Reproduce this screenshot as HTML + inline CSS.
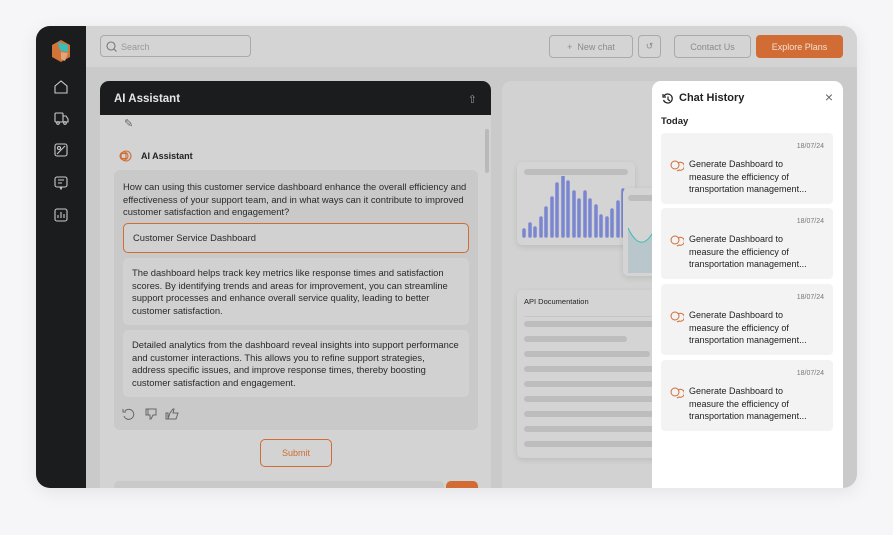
<!DOCTYPE html>
<html><head><style>
*{box-sizing:border-box;margin:0;padding:0}
body{width:893px;height:535px;background:#f6f6f9;font-family:"Liberation Sans",sans-serif;position:relative;overflow:hidden;color:#222}
.frame{position:absolute;left:36px;top:26px;width:821px;height:462px;border-radius:14px;overflow:hidden;background:#c9cac9;box-shadow:0 4px 18px rgba(0,0,0,.08)}
.side{position:absolute;left:0;top:0;width:50px;height:462px;background:#1b1c1e}
.top{position:absolute;left:50px;top:0;right:0;height:41px;background:#d3d4d3}
.btn{position:absolute;top:9px;height:23px;border:1px solid #a9aaa9;border-radius:4px;font-size:9px;color:#8a8b8a;display:flex;align-items:center;justify-content:center}
.panel{position:absolute;left:64px;top:55px;width:391px;height:420px;background:#d2d3d2;border-radius:9px 9px 0 0;overflow:hidden}
.ph{height:34px;background:#1b1c1e;color:#e6e6e6;font-weight:bold;font-size:11.5px;padding:12px 14px}
.box{position:absolute;background:#d0d1d0;border-radius:5px;font-size:9.4px;line-height:12.6px;color:#2a2a2a;padding:0 9px}
.hist{position:absolute;left:616px;top:55px;width:191px;height:420px;background:#fff;border-radius:9px 9px 0 0}
.card{position:absolute;left:9px;width:172px;height:71px;background:#f3f3f3;border-radius:4px}
.card .d{position:absolute;right:9px;top:10px;font-size:7px;color:#777}
.card .t{position:absolute;left:28px;top:25px;font-size:9px;line-height:12.5px;color:#222}
.bar{position:absolute;height:6px;background:#bcbdbc;border-radius:3px;left:22px}
</style></head><body>
<div class="frame">
 <div class="side">
  <svg style="position:absolute;left:15px;top:13px" width="20" height="24" viewBox="0 0 20 24"><path d="M10 1 L19 6 L19 18 L10 23 L1 18 L1 6Z" fill="#d2733a"/><path d="M7 3 L17 6 L17 13 L10 12 L8 9Z" fill="#3bbcb4"/><path d="M10 13 L17 14 L14 22 L10 20Z" fill="#e0a57a"/></svg>
  <svg style="position:absolute;left:17px;top:54px" width="16" height="170" fill="none" stroke="#ccc" stroke-width="1.1">
   <path d="M2 6 L8 1 L14 6 L14 13 L2 13Z"/>
   <rect x="2" y="33" width="8" height="9" rx="1"/><path d="M10 36 h3 l2 3 v3 h-5"/><circle cx="5" cy="43" r="1.3"/><circle cx="12" cy="43" r="1.3"/>
   <rect x="2" y="64" width="12" height="12" rx="2"/><path d="M4 74 L12 66"/><circle cx="6" cy="68" r="1.5"/>
   <rect x="2" y="97" width="12" height="10" rx="2"/><path d="M5 100h6M5 103h4M7 107 l1 2 1-2"/>
   <rect x="2" y="129" width="12" height="12" rx="2"/><path d="M5 138v-3M8 138v-6M11 138v-4"/>
  </svg>
 </div>
 <div class="top">
  <div style="position:absolute;left:14px;top:9px;width:151px;height:22px;border:1px solid #a9aaa9;border-radius:4px;font-size:9px;color:#999;padding:6px 0 0 20px">Search
   <svg style="position:absolute;left:5px;top:5px" width="11" height="11" fill="none" stroke="#777" stroke-width="1.1"><circle cx="5" cy="5" r="4"/><path d="M8 8l2.5 2.5"/></svg></div>
  <div class="btn" style="left:463px;width:84px">+&nbsp; New chat</div>
  <div class="btn" style="left:552px;width:23px">↺</div>
  <div class="btn" style="left:588px;width:77px">Contact Us</div>
  <div class="btn" style="left:670px;width:87px;background:#d06c34;border-color:#d06c34;color:#f3e0d3">Explore Plans</div>
 </div>
 <div class="panel">
  <div class="ph">AI Assistant<span style="float:right;font-weight:normal;color:#999;font-size:11px">⇧</span></div>
  <div style="position:absolute;left:24px;top:36px;font-size:11px;color:#666">✎</div>
  <div style="position:absolute;left:385px;top:48px;width:4px;height:44px;background:#b8b9b8;border-radius:2px"></div>
  <svg style="position:absolute;left:18px;top:69px" width="14" height="12" fill="none" stroke="#d06c34" stroke-width="1.1"><circle cx="8" cy="6" r="5"/><circle cx="6" cy="6" r="4"/><rect x="3" y="3.5" width="5" height="5"/></svg>
  <div style="position:absolute;left:41px;top:70px;font-size:9px;font-weight:bold;color:#222">AI Assistant</div>
  <div style="position:absolute;left:14px;top:89px;width:364px;height:260px;background:#c8c9c8;border-radius:6px"></div>
  <div class="box" style="left:14px;top:97px;width:364px;background:none;padding-top:3px">How can using this customer service dashboard enhance the overall efficiency and effectiveness of your support team, and in what ways can it contribute to improved customer satisfaction and engagement?</div>
  <div class="box" style="left:23px;top:142px;width:346px;height:30px;border:1px solid #d06c34;padding-top:8px">Customer Service Dashboard</div>
  <div class="box" style="left:23px;top:177px;width:346px;height:67px;padding-top:9px">The dashboard helps track key metrics like response times and satisfaction scores. By identifying trends and areas for improvement, you can streamline support processes and enhance overall service quality, leading to better customer satisfaction.</div>
  <div class="box" style="left:23px;top:249px;width:346px;height:67px;padding-top:9px">Detailed analytics from the dashboard reveal insights into support performance and customer interactions. This allows you to refine support strategies, address specific issues, and improve response times, thereby boosting customer satisfaction and engagement.</div>
  <svg style="position:absolute;left:22px;top:326px" width="62" height="14" fill="none" stroke="#666" stroke-width="1"><path d="M3 4 A5 5 0 1 1 2 9M1 2v3h3"/><path d="M26 2h8v6h-3l-2 4h-1v-4h-2zM24 2h2v6h-2z"/><path d="M46 12h8l2-6h-5l1-4h-1l-3 4zM44 6h2v6h-2z"/></svg>
  <div style="position:absolute;left:160px;top:358px;width:72px;height:28px;border:1px solid #d06c34;border-radius:5px;font-size:9px;color:#d06c34;text-align:center;line-height:26px">Submit</div>
  <div style="position:absolute;left:14px;top:400px;width:330px;height:30px;background:#c8c9c8;border-radius:5px"></div>
  <div style="position:absolute;left:346px;top:400px;width:32px;height:20px;background:#d06c34;border-radius:5px"></div>
 </div>
 <div style="position:absolute;left:466px;top:55px;width:160px;height:420px;background:#d1d2d1;border-radius:9px 0 0 0"></div>
 <div style="position:absolute;left:481px;top:136px;width:118px;height:83px;background:#d3d4d3;border-radius:5px;box-shadow:0 2px 6px rgba(0,0,0,.1)">
  <div style="position:absolute;left:7px;top:7px;width:104px;height:6px;background:#bcbdbc;border-radius:3px"></div>
  <svg style="position:absolute;left:5px;top:14px" width="110" height="64"><g stroke-width="3.5" stroke-linecap="round">
  <path d="M2 60v-6M8 60v-12M13 60v-8M19 60v-18M24 60v-28M30 60v-38M35 60v-52M41 60v-62M46 60v-54M52 60v-44M57 60v-36M63 60v-44M68 60v-36M74 60v-30M79 60v-20M85 60v-18M90 60v-26M96 60v-34M101 60v-46" stroke="#7b86d0"/></g></svg>
 </div>
 <div style="position:absolute;left:587px;top:162px;width:40px;height:88px;background:#d3d4d3;border-radius:5px;box-shadow:0 2px 6px rgba(0,0,0,.1)">
  <div style="position:absolute;left:5px;top:7px;width:35px;height:6px;background:#bcbdbc;border-radius:3px"></div>
  <svg style="position:absolute;left:5px;top:30px" width="35" height="55"><path d="M0 10 Q12 35 24 16 L35 0 V55 H0Z" fill="#b9c7cc"/><path d="M0 10 Q12 35 24 16 L35 0" stroke="#3bbcb4" fill="none"/></svg>
 </div>
 <div style="position:absolute;left:481px;top:264px;width:150px;height:168px;background:#d3d4d3;border-radius:5px;box-shadow:0 2px 6px rgba(0,0,0,.1)">
  <div style="position:absolute;left:7px;top:7px;font-size:7.5px;color:#222">API Documentation</div>
  <div style="position:absolute;left:7px;top:26px;width:140px;height:1px;background:#c4c5c4"></div>
  <div class="bar" style="left:7px;top:31px;width:140px"></div>
  <div class="bar" style="left:7px;top:46px;width:103px"></div>
  <div class="bar" style="left:7px;top:61px;width:126px"></div>
  <div class="bar" style="left:7px;top:76px;width:140px"></div>
  <div class="bar" style="left:7px;top:91px;width:140px"></div>
  <div class="bar" style="left:7px;top:106px;width:140px"></div>
  <div class="bar" style="left:7px;top:121px;width:140px"></div>
  <div class="bar" style="left:7px;top:136px;width:140px"></div>
  <div class="bar" style="left:7px;top:151px;width:140px"></div>
 </div>
 <div class="hist">
  <svg style="position:absolute;left:10px;top:12px" width="12" height="12" fill="none" stroke="#222" stroke-width="1.2"><path d="M2 3 A4.5 4.5 0 1 1 1.5 7"/><path d="M1 1v3h3M6 3.5v3l2 1.5"/></svg>
  <div style="position:absolute;left:27px;top:11px;font-size:11px;font-weight:bold;color:#222">Chat History</div>
  <div style="position:absolute;right:10px;top:8px;font-size:14px;color:#666">×</div>
  <div style="position:absolute;left:9px;top:35px;font-size:9.5px;font-weight:bold;color:#222">Today</div>
  <div class="card" style="top:52px"><div class="d">18/07/24</div><div class="t">Generate Dashboard to<br>measure the efficiency of<br>transportation management...</div><svg style="position:absolute;left:9px;top:27px" width="14" height="12" fill="none" stroke="#d06c34"><circle cx="5" cy="5" r="4"/><path d="M8 3a4 4 0 1 1 1 7l-2 1"/></svg></div>
  <div class="card" style="top:127px"><div class="d">18/07/24</div><div class="t">Generate Dashboard to<br>measure the efficiency of<br>transportation management...</div><svg style="position:absolute;left:9px;top:27px" width="14" height="12" fill="none" stroke="#d06c34"><circle cx="5" cy="5" r="4"/><path d="M8 3a4 4 0 1 1 1 7l-2 1"/></svg></div>
  <div class="card" style="top:203px"><div class="d">18/07/24</div><div class="t">Generate Dashboard to<br>measure the efficiency of<br>transportation management...</div><svg style="position:absolute;left:9px;top:27px" width="14" height="12" fill="none" stroke="#d06c34"><circle cx="5" cy="5" r="4"/><path d="M8 3a4 4 0 1 1 1 7l-2 1"/></svg></div>
  <div class="card" style="top:279px"><div class="d">18/07/24</div><div class="t">Generate Dashboard to<br>measure the efficiency of<br>transportation management...</div><svg style="position:absolute;left:9px;top:27px" width="14" height="12" fill="none" stroke="#d06c34"><circle cx="5" cy="5" r="4"/><path d="M8 3a4 4 0 1 1 1 7l-2 1"/></svg></div>
 </div>
</div>
</body></html>
